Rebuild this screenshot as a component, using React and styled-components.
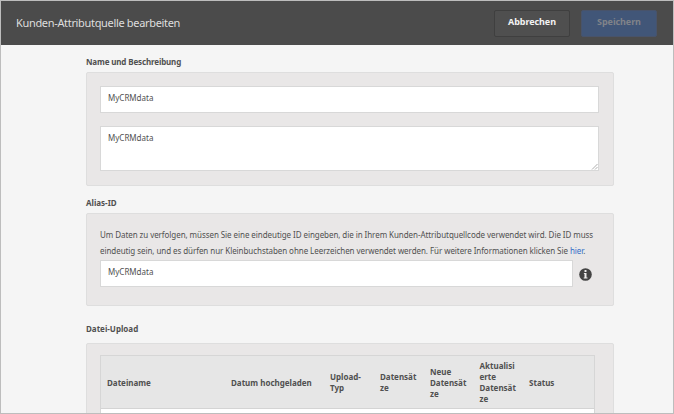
import React from "react";
import styled, { createGlobalStyle } from "styled-components";

const GlobalStyle = createGlobalStyle`
  * { box-sizing: border-box; }
  html, body { margin: 0; padding: 0; overflow: hidden; }
  body { font-family: "Noto Sans", "Open Sans", sans-serif; color: #505050; }
`;

const Window = styled.div`
  width: 674px;
  height: 414px;
  display: flex;
  flex-direction: column;
  overflow: hidden;
  background: #f5f5f5;
  border: 1px solid #bdbdbd;
`;

const Header = styled.header`
  flex: none;
  height: 44px;
  display: flex;
  align-items: center;
  padding: 0 16px 0 15px;
  background: #4b4b4b;
`;

const Title = styled.h1`
  margin: 0 auto 0 0;
  font-size: 11px;
  line-height: 16px;
  font-weight: 400;
  letter-spacing: -0.33px;
  white-space: nowrap;
  color: #dedede;
`;

const Button = styled.button`
  height: 27px;
  width: 76px;
  margin-left: 11px;
  padding: 0 0 2px;
  font: 700 9px/12px "Noto Sans", sans-serif;
  letter-spacing: -0.07px;
  border-radius: 2px;
  border: 1px solid ${(p) => (p.$primary ? "#48536a" : "#3f3f3f")};
  background: ${(p) => (p.$primary ? "#415678" : "#4f4f4f")};
  color: ${(p) => (p.$primary ? "#808389" : "#f3f3f3")};
`;

const Content = styled.main`
  width: 528px;
  margin-left: 85px;
  display: flex;
  flex-direction: column;
`;

const SectionLabel = styled.h2`
  margin: ${(p) => p.$top}px 0 ${(p) => p.$bottom || 4}px;
  height: 12px;
  font-size: 8px;
  line-height: 12px;
  font-weight: 700;
  letter-spacing: ${(p) => p.$spacing || 0}px;
  white-space: nowrap;
`;

const Panel = styled.section`
  height: ${(p) => p.$height}px;
  padding: ${(p) => p.$pad || 13}px 13px 0;
  display: flex;
  flex-direction: column;
  background: #e9e7e7;
  border: 1px solid #dedede;
  border-radius: 2px;
`;

const Input = styled.input`
  display: block;
  width: ${(p) => p.$width}px;
  height: 27px;
  padding: 0 7px 4px;
  font: 400 8px/12px "Noto Sans", sans-serif;
  color: #505050;
  background: #fff;
  border: 1px solid #d8d8d8;
  border-radius: 0;
  outline: none;
`;

const TextArea = styled.textarea`
  display: block;
  width: 499px;
  height: 45px;
  margin: 13px 0 0;
  padding: 5px 7px;
  font: 400 8px/12px "Noto Sans", sans-serif;
  color: #505050;
  background: #fff;
  border: 1px solid #d8d8d8;
  border-radius: 0;
  outline: none;
  overflow: hidden;
  resize: none;
`;

const TextAreaWrap = styled.div`
  position: relative;
  width: 499px;
`;

const Grip = styled.svg`
  position: absolute;
  right: 1px;
  bottom: 1px;
`;

const Help = styled.p`
  margin: 0 0 1px;
  font-size: 8px;
  line-height: 16px;
  white-space: nowrap;
`;

const HelpLine = styled.span`
  display: block;
  letter-spacing: -0.064px;
`;

const Link = styled.a`
  color: #326ec8;
  text-decoration: none;
`;

const FieldRow = styled.div`
  display: flex;
  align-items: center;
  gap: 6px;
`;

const Table = styled.div`
  width: 495px;
  flex: none;
  background: #fff;
  border: 1px solid #d6d6d6;
`;

const TableHead = styled.div`
  height: 53px;
  display: grid;
  grid-template-columns: 124px 99px 50px 50px 49.5px 49.5px 71px;
  align-items: center;
  background: #e6e6e6;
  border-bottom: 1px solid #d4d4d4;
`;

const HeadCell = styled.div`
  padding-left: 6px;
  font-size: 8px;
  line-height: 11px;
  font-weight: 700;
  white-space: pre;
`;

const TableRow = styled.div`
  height: 30px;
`;

const columns = [
  "Dateiname",
  "Datum hochgeladen",
  "Upload-\nTyp",
  "Datensät\nze",
  "Neue\nDatensät\nze",
  "Aktualisi\nerte\nDatensät\nze",
  "Status",
];

const InfoSvg = styled.svg`
  margin-top: 2px;
`;

function InfoIcon() {
  return (
    <InfoSvg width="13" height="13" viewBox="0 0 13 13" aria-label="Info">
      <circle cx="6.5" cy="6.5" r="6.3" fill="#444" />
      <rect x="5.5" y="2" width="2" height="2" rx="0.5" fill="#f0eeee" />
      <path d="M4.9 5h2.6v4.6h1v.9H4.7v-.9h.8V5.9h-.6z" fill="#f0eeee" />
    </InfoSvg>
  );
}

export default function App() {
  return (
    <>
      <GlobalStyle />
      <Window>
        <Header>
          <Title>Kunden-Attributquelle bearbeiten</Title>
          <Button>Abbrechen</Button>
          <Button $primary>Speichern</Button>
        </Header>
        <Content>
          <SectionLabel $top={11} $spacing={-0.14}>Name und Beschreibung</SectionLabel>
          <Panel $height={114}>
            <Input $width={499} defaultValue="MyCRMdata" />
            <TextAreaWrap>
              <TextArea defaultValue="MyCRMdata" />
              <Grip width="7" height="7" viewBox="0 0 7 7">
                <path d="M1 6.5l5.5-5.5M4 6.5l2.5-2.5" stroke="#999" strokeWidth="0.8" />
              </Grip>
            </TextAreaWrap>
          </Panel>
          <SectionLabel $top={11}>Alias-ID</SectionLabel>
          <Panel $height={93}>
            <Help>
              <HelpLine>
                Um Daten zu verfolgen, müssen Sie eine eindeutige ID eingeben, die in Ihrem Kunden-Attributquellcode verwendet wird. Die ID muss
              </HelpLine>
              <HelpLine>
                eindeutig sein, und es dürfen nur Kleinbuchstaben ohne Leerzeichen verwendet werden. Für weitere Informationen klicken Sie <Link>hier</Link>.
              </HelpLine>
            </Help>
            <FieldRow>
              <Input $width={473} defaultValue="MyCRMdata" />
              <InfoIcon />
            </FieldRow>
          </Panel>
          <SectionLabel $top={17} $bottom={8}>Datei-Upload</SectionLabel>
          <Panel $height={100} $pad={11}>
            <Table>
              <TableHead>
                {columns.map((name) => (
                  <HeadCell key={name}>{name}</HeadCell>
                ))}
              </TableHead>
              <TableRow />
            </Table>
          </Panel>
        </Content>
      </Window>
    </>
  );
}
